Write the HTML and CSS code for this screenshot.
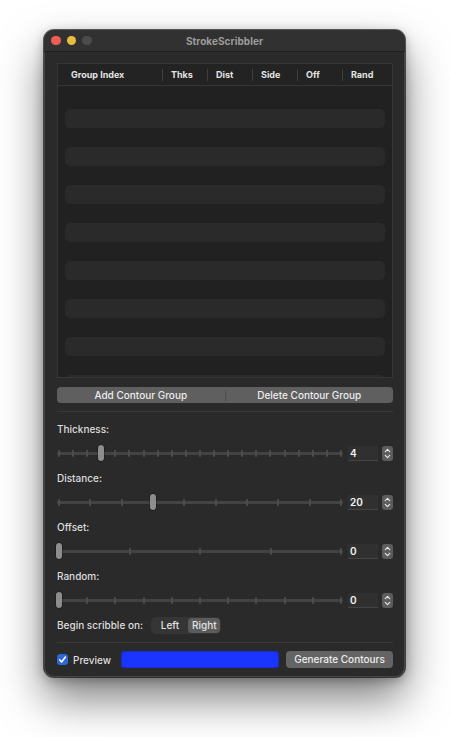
FILE: index.html
```html
<!DOCTYPE html>
<html>
<head>
<meta charset="utf-8">
<link rel="stylesheet" href="styles.css">
</head>
<body>
<div class="window">
  <div class="titlebar">
    <div class="lights">
      <span class="light red"></span>
      <span class="light yellow"></span>
      <span class="light gray"></span>
    </div>
    <div class="title">StrokeScribbler</div>
    <div></div>
  </div>
  <div class="content">
    <div class="table">
      <div class="thead">
        <div class="th first">Group Index</div>
        <div class="th">Thks</div>
        <div class="th">Dist</div>
        <div class="th">Side</div>
        <div class="th">Off</div>
        <div class="th">Rand</div>
      </div>
      <div class="tbody">
        <div class="row"></div><div class="row alt"></div>
        <div class="row"></div><div class="row alt"></div>
        <div class="row"></div><div class="row alt"></div>
        <div class="row"></div><div class="row alt"></div>
        <div class="row"></div><div class="row alt"></div>
        <div class="row"></div><div class="row alt"></div>
        <div class="row"></div><div class="row alt"></div>
        <div class="row"></div><div class="row alt"></div>
      </div>
    </div>

    <div class="segbuttons">
      <div class="segbtn">Add Contour Group</div>
      <div class="segdiv"></div>
      <div class="segbtn">Delete Contour Group</div>
    </div>

    <div class="sep"></div>

    <div class="group">
      <div class="label">Thickness:</div>
      <div class="ctrl">
        <div class="slider">
          <div class="track"></div>
          <div class="ticks">
            <i></i><i></i><i></i><i></i><i></i><i></i><i></i><i></i><i></i><i></i><i></i>
            <i></i><i></i><i></i><i></i><i></i><i></i><i></i><i></i><i></i><i></i>
          </div>
          <div class="thumb" style="--f:0.15"></div>
        </div>
        <div class="field">4</div>
        <div class="stepper"><svg viewBox="0 0 11 15" width="11" height="15"><path d="M3.3 5.6 L5.5 3.4 L7.7 5.6 M3.3 9.4 L5.5 11.6 L7.7 9.4" fill="none" stroke="#e6e6e6" stroke-width="1.2" stroke-linecap="round" stroke-linejoin="round"/></svg></div>
      </div>
    </div>

    <div class="group">
      <div class="label">Distance:</div>
      <div class="ctrl">
        <div class="slider">
          <div class="track"></div>
          <div class="ticks">
            <i></i><i></i><i></i><i></i><i></i><i></i><i></i><i></i><i></i><i></i>
          </div>
          <div class="thumb" style="--f:0.3333"></div>
        </div>
        <div class="field">20</div>
        <div class="stepper"><svg viewBox="0 0 11 15" width="11" height="15"><path d="M3.3 5.6 L5.5 3.4 L7.7 5.6 M3.3 9.4 L5.5 11.6 L7.7 9.4" fill="none" stroke="#e6e6e6" stroke-width="1.2" stroke-linecap="round" stroke-linejoin="round"/></svg></div>
      </div>
    </div>

    <div class="group">
      <div class="label">Offset:</div>
      <div class="ctrl">
        <div class="slider">
          <div class="track"></div>
          <div class="ticks">
            <i></i><i></i><i></i><i></i><i></i>
          </div>
          <div class="thumb" style="--f:0"></div>
        </div>
        <div class="field">0</div>
        <div class="stepper"><svg viewBox="0 0 11 15" width="11" height="15"><path d="M3.3 5.6 L5.5 3.4 L7.7 5.6 M3.3 9.4 L5.5 11.6 L7.7 9.4" fill="none" stroke="#e6e6e6" stroke-width="1.2" stroke-linecap="round" stroke-linejoin="round"/></svg></div>
      </div>
    </div>

    <div class="group">
      <div class="label">Random:</div>
      <div class="ctrl">
        <div class="slider">
          <div class="track"></div>
          <div class="ticks">
            <i></i><i></i><i></i><i></i><i></i><i></i><i></i><i></i><i></i><i></i><i></i>
          </div>
          <div class="thumb" style="--f:0"></div>
        </div>
        <div class="field">0</div>
        <div class="stepper"><svg viewBox="0 0 11 15" width="11" height="15"><path d="M3.3 5.6 L5.5 3.4 L7.7 5.6 M3.3 9.4 L5.5 11.6 L7.7 9.4" fill="none" stroke="#e6e6e6" stroke-width="1.2" stroke-linecap="round" stroke-linejoin="round"/></svg></div>
      </div>
    </div>

    <div class="begin">
      <span class="label">Begin scribble on:</span>
      <div class="seg">
        <span class="segitem">Left</span>
        <span class="segitem sel">Right</span>
      </div>
    </div>

    <div class="sep sep2"></div>

    <div class="bottom">
      <div class="check">
        <span class="box"><svg viewBox="0 0 11 11" width="11" height="11"><path d="M2.6 5.8 L4.6 7.9 L8.4 3.1" fill="none" stroke="#fff" stroke-width="1.6" stroke-linecap="round" stroke-linejoin="round"/></svg></span>
        <span class="label">Preview</span>
      </div>
      <div class="well"></div>
      <div class="btn">Generate Contours</div>
    </div>
  </div>
</div>
</body>
</html>
```

FILE: styles.css
```css
* { box-sizing: border-box; }
html, body { margin: 0; padding: 0; }
body {
  background: #ffffff;
  padding: 30px 0 0 44px;
  font-family: Inter, "Noto Sans", "Liberation Sans", sans-serif;
  -webkit-font-smoothing: antialiased;
  min-height: 737px;
}
.window {
  width: 361px;
  height: 647px;
  border-radius: 10px;
  background: #2a2a2a;
  overflow: hidden;
  box-shadow: 0 0 0 1px rgba(0,0,0,0.6), inset 0 0 0 1px rgba(255,255,255,0.13), 0 22px 44px rgba(0,0,0,0.5), 0 3px 12px rgba(0,0,0,0.3);
  display: flex;
  flex-direction: column;
}
.titlebar {
  height: 22px;
  flex: none;
  display: grid;
  grid-template-columns: 1fr auto 1fr;
  align-items: center;
  background: #313131;
  border-bottom: 1px solid #202020;
}
.lights { display: flex; gap: 6px; padding-left: 7px; }
.light { width: 9.5px; height: 9.5px; border-radius: 50%; display: block; }
.red { background: #ec5f57; }
.yellow { background: #e6bd3d; }
.gray { background: #4c4c4c; }
.title {
  font-size: 10px;
  font-weight: 700;
  color: #9c9c9c;
  letter-spacing: 0.05px;
}
.content {
  flex: 1;
  padding: 11px 12px 0 13px;
  display: flex;
  flex-direction: column;
}
.table {
  height: 315px;
  border: 1px solid #363636;
  background: #212121;
  display: flex;
  flex-direction: column;
  overflow: hidden;
}
.thead {
  height: 22px;
  flex: none;
  display: grid;
  grid-template-columns: 104px 45px 45px 45px 45px 1fr;
  align-items: center;
  border-bottom: 1px solid #353535;
  background: #232323;
  padding-top: 1px;
}
.th {
  font-size: 9px;
  font-weight: 700;
  color: #e4e4e4;
  padding-left: 8px;
  border-left: 1px solid #3f3f3f;
  line-height: 12px;
}
.th.first { padding-left: 13px; border-left: none; }
.tbody {
  flex: 1;
  overflow: hidden;
  padding: 4px 7px 0 7px;
  display: flex;
  flex-direction: column;
}
.row { height: 19px; flex: none; border-radius: 5px; }
.row.alt { background: #2a2a2a; }
.segbuttons {
  margin-top: 9px;
  height: 16px;
  display: flex;
  align-items: center;
  background: #5f5f5f;
  border-radius: 4px;
}
.segbtn {
  flex: 1;
  text-align: center;
  font-size: 10px;
  font-weight: 500;
  color: #ececec;
  line-height: 16px;
}
.segdiv { width: 1px; height: 11px; background: #4d4d4d; }
.sep { height: 1px; background: #393939; margin-top: 8px; }
.group { display: flex; flex-direction: column; margin-top: 9px; }
.sep + .group { margin-top: 10px; }
.label {
  font-size: 10px;
  font-weight: 500;
  color: #dedede;
  line-height: 14px;
}
.ctrl {
  margin-top: 8px;
  height: 18px;
  display: flex;
  align-items: center;
}
.slider {
  flex: 1;
  height: 18px;
  position: relative;
  display: flex;
  align-items: center;
  margin-right: 5px;
}
.track {
  position: absolute;
  left: 0; right: 0;
  top: 8px;
  height: 3px;
  border-radius: 2px;
  background: #434343;
}
.ticks {
  position: relative;
  flex: 1;
  display: flex;
  justify-content: space-between;
  padding: 0 1px;
  height: 7px;
}
.ticks i { width: 2px; height: 7px; background: #4d4d4d; display: block; border-radius: 1px; }
.thumb {
  position: absolute;
  top: 1px;
  left: calc(2px + (100% - 4px) * var(--f));
  transform: translateX(-50%);
  width: 6px;
  height: 16px;
  border-radius: 3px;
  background: #8d8d8d;
  box-shadow: 0 0 0 0.5px rgba(0,0,0,0.5);
}
.field {
  width: 30px;
  height: 15px;
  flex: none;
  background: #303030;
  border-bottom: 1px solid #444;
  font-size: 10px;
  font-weight: 600;
  color: #f2f2f2;
  padding-left: 2px;
  line-height: 15px;
  margin-right: 4px;
}
.stepper {
  width: 11px;
  height: 15px;
  flex: none;
  border-radius: 3px;
  background: #5d5d5d;
  display: flex;
}
.begin {
  margin-top: 7px;
  height: 18px;
  display: flex;
  align-items: center;
  gap: 8px;
}
.seg {
  display: flex;
  align-items: center;
  height: 17px;
  padding: 1px;
  background: #353535;
  border-radius: 5px;
}
.segitem {
  font-size: 10px;
  font-weight: 500;
  color: #e2e2e2;
  line-height: 15px;
  height: 15px;
  padding: 0 4px;
  border-radius: 4px;
}
.segitem:first-child { width: 36px; text-align: center; }
.segitem.sel { background: #5b5b5b; width: 32px; text-align: center; }
.sep2 { margin-top: 8px; }
.bottom {
  margin-top: 8px;
  height: 17px;
  display: flex;
  align-items: center;
}
.check { display: flex; align-items: center; gap: 5px; }
.box {
  width: 11px;
  height: 11px;
  border-radius: 3px;
  background: #2d66d9;
  display: flex;
}
.well {
  margin-left: 10px;
  width: 158px;
  height: 17px;
  border-radius: 4px;
  background: #1a35ff;
  box-shadow: inset 0 0 0 1px rgba(0,0,0,0.15);
}
.btn {
  margin-left: auto;
  width: 107px;
  height: 17px;
  border-radius: 4px;
  background: #646464;
  font-size: 10px;
  font-weight: 500;
  color: #ececec;
  text-align: center;
  line-height: 17px;
}
```
